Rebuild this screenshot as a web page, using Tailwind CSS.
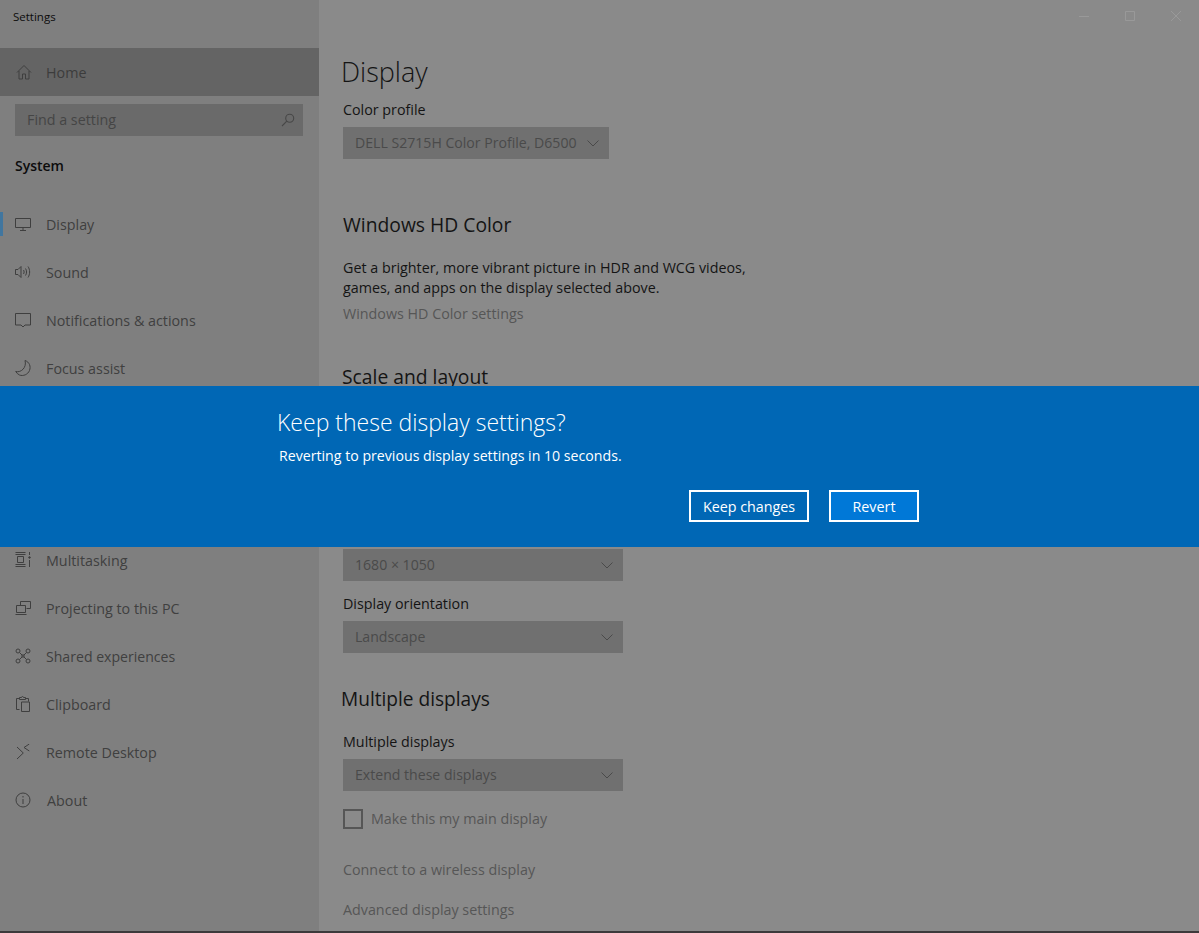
<!DOCTYPE html>
<html lang="en">
<head>
  <meta charset="UTF-8">
  <title>Settings</title>
  <script src="https://cdn.jsdelivr.net/npm/@tailwindcss/browser@4"></script>
</head>
<body class="bg-[#8a8a8a] font-['Open_Sans',sans-serif] overflow-hidden">
  <div class="relative flex h-[933px] w-[1199px] overflow-hidden">

    <!-- sidebar -->
    <aside class="w-[319px] shrink-0 bg-[#7f7f7f] text-[14.3px] text-[#404040]">
      <div class="h-[48px] pl-[13px] pt-[8px] text-[11.5px] leading-[18px] text-[#0c0c0c]">Settings</div>
      <div class="flex h-[48px] items-center bg-[#646464] text-[#3c3c3c]">
        <svg class="ml-[16px] w-[16px] h-[16px]" viewBox="0 0 16 16" fill="none" stroke="#3f3f3f" stroke-width="1"><path d="M1 8.500 8 1.500l7 7M3 7v8h3.500v-5h3v5H13V7"/></svg>
        <span class="ml-[14px] pt-[2px]">Home</span>
      </div>
      <div class="ml-[15px] mr-[16px] mt-[8px] flex h-[32px] items-center justify-between bg-[#6a6a6a] pl-[12px] pr-[8px] text-[#454545]">
        <span>Find a setting</span>
        <svg class="w-[14px] h-[14px]" viewBox="0 0 14 14" fill="none" stroke="#474747" stroke-width="1.100"><circle cx="8.700" cy="5.300" r="4"/><path d="M5.800 8.200 1 13"/></svg>
      </div>
      <div class="mt-[20px] ml-[15px] h-[20px] text-[14px] leading-[20px] font-semibold text-[#0c0c0c]">System</div>

      <nav class="mt-[24px]">
        <a class="relative flex h-[48px] items-center">
          <span class="absolute left-0 top-[12px] h-[24px] w-[3px] bg-[#41769f]"></span>
          <svg class="ml-[15px] w-[16px] h-[16px]" viewBox="0 0 16 16" fill="none" stroke="#3f3f3f"><path d="M.500 2.500h15v9H.500zM8 11.500v3M5 14.500h6"/></svg>
          <span class="ml-[15px] pt-[2px]">Display</span>
        </a>
        <a class="flex h-[48px] items-center">
          <svg class="ml-[15px] w-[16px] h-[16px]" viewBox="0 0 16 16" fill="none" stroke="#3f3f3f"><path d="M.500 5.500h2.500l3-3v11l-3-3H.500zM8.500 6c.8 1.200.8 2.800 0 4M10.500 4.500c1.400 2 1.400 5 0 7M13 2.500c2.200 3.300 2.200 7.700 0 11"/></svg>
          <span class="ml-[15px] pt-[2px]">Sound</span>
        </a>
        <a class="flex h-[48px] items-center">
          <svg class="ml-[15px] w-[16px] h-[16px]" viewBox="0 0 16 16" fill="none" stroke="#3f3f3f"><path d="M.500 1.500h15v11.500h-5.500L8 15l-2-2H.500z"/></svg>
          <span class="ml-[15px] pt-[2px]">Notifications &amp; actions</span>
        </a>
        <a class="flex h-[48px] items-center">
          <svg class="ml-[15px] w-[16px] h-[16px]" viewBox="0 0 16 16" fill="none" stroke="#3f3f3f"><path d="M10 .500c4.500 1.500 6 6 4.500 10S8 16.500 4.500 15C3 14.300 1.500 13 .700 11.500 6 13 12 7.500 10 .500z"/></svg>
          <span class="ml-[15px] pt-[2px]">Focus assist</span>
        </a>
        <div class="h-[144px]"></div>
        <a class="flex h-[48px] items-center">
          <svg class="ml-[15px] w-[16px] h-[16px]" viewBox="0 0 16 16" fill="none" stroke="#3f3f3f"><path d="M.500 .500h10M.500 2.500h10M2.500 4.500h6v6h-6zM.500 12.500h10M.500 14.500h10M14.500 0v3M14.500 8v7"/><circle cx="14.500" cy="5.500" r=".8" fill="#3f3f3f"/></svg>
          <span class="ml-[15px] pt-[2px]">Multitasking</span>
        </a>
        <a class="flex h-[48px] items-center">
          <svg class="ml-[15px] w-[16px] h-[16px]" viewBox="0 0 16 16" fill="none" stroke="#3f3f3f"><path d="M5.500 5V1.500h10v7h-4M1.500 5.500h9v7h-9zM.5 14.500h11"/></svg>
          <span class="ml-[15px] pt-[2px]">Projecting to this PC</span>
        </a>
        <a class="flex h-[48px] items-center">
          <svg class="ml-[15px] w-[16px] h-[16px]" viewBox="0 0 16 16" fill="none" stroke="#3f3f3f"><circle cx="3" cy="3" r="2"/><circle cx="13" cy="3" r="2"/><circle cx="3" cy="13" r="2"/><circle cx="13" cy="13" r="2"/><path d="M4.500 4.500 7 7h2l2.500-2.500M4.500 11.500 7 9h2l2.500 2.500M7 7v2M9 7v2"/></svg>
          <span class="ml-[15px] pt-[2px] text-[14.1px]">Shared experiences</span>
        </a>
        <a class="flex h-[48px] items-center">
          <svg class="ml-[15px] w-[16px] h-[16px]" viewBox="0 0 16 16" fill="none" stroke="#3f3f3f"><path d="M4.500 13.500h-3v-11h3M10.500 2.500h3v3M4.500 1.500h2c0-1.300 2-1.300 2 0h2v2h-6zM6.500 6h8v9.500h-8z"/></svg>
          <span class="ml-[15px] pt-[2px]">Clipboard</span>
        </a>
        <a class="flex h-[48px] items-center">
          <svg class="ml-[15px] w-[16px] h-[16px]" viewBox="0 0 16 16" fill="none" stroke="#3f3f3f"><path d="M2 3l6.300 6L2 15M14.300 0 9 3.500l5.300 3.500"/></svg>
          <span class="ml-[15px] pt-[2px]">Remote Desktop</span>
        </a>
        <a class="flex h-[48px] items-center">
          <svg class="ml-[15px] w-[16px] h-[16px]" viewBox="0 0 16 16" fill="none" stroke="#3f3f3f"><circle cx="8" cy="8" r="7"/><path d="M8 7v5M8 4v1.500"/></svg>
          <span class="ml-[16px] pt-[2px]">About</span>
        </a>
      </nav>
    </aside>

    <!-- content -->
    <main class="flex-1 pl-[24px] pt-[52px] text-[14.3px] text-[#141414]">
      <h1 class="-ml-[2px] h-[40px] text-[27px] leading-[40px] font-light">Display</h1>
      <p class="mt-[8px] h-[20px] leading-[20px]">Color profile</p>
      <div class="mt-[7px] flex h-[32px] w-[266px] items-center justify-between bg-[#707070] pl-[12px] pr-[10px] text-[14.1px] text-[#4a4a4a]">
        <span>DELL S2715H Color Profile, D6500</span>
        <svg class="w-[12px] h-[12px]" viewBox="0 0 12 12" fill="none" stroke="#4a4a4a"><path d="M.500 3.500 6 9l5.500-5.500"/></svg>
      </div>

      <h2 class="mt-[52px] h-[28px] text-[19.300px] leading-[28px]">Windows HD Color</h2>
      <p class="mt-[19px] leading-[20px]">Get a brighter, more vibrant picture in HDR and WCG videos,<br>games, and apps on the display selected above.</p>
      <p class="mt-[6px] h-[20px] leading-[20px] text-[#565656]">Windows HD Color settings</p>

      <h2 class="-ml-[1px] mt-[39px] h-[28px] text-[19.300px] leading-[28px]">Scale and layout</h2>

      <div class="mt-[158px] flex h-[32px] w-[280px] items-center justify-between bg-[#707070] pl-[12px] pr-[10px] text-[14.1px] text-[#4a4a4a]">
        <span>1680 × 1050</span>
        <svg class="w-[12px] h-[12px]" viewBox="0 0 12 12" fill="none" stroke="#4a4a4a"><path d="M.500 3.500 6 9l5.500-5.500"/></svg>
      </div>
      <p class="mt-[13px] h-[20px] leading-[20px]">Display orientation</p>
      <div class="mt-[7px] flex h-[32px] w-[280px] items-center justify-between bg-[#707070] pl-[12px] pr-[10px] text-[14.1px] text-[#4a4a4a]">
        <span>Landscape</span>
        <svg class="w-[12px] h-[12px]" viewBox="0 0 12 12" fill="none" stroke="#4a4a4a"><path d="M.500 3.500 6 9l5.500-5.500"/></svg>
      </div>

      <h2 class="-ml-[2px] mt-[32px] h-[28px] text-[19.100px] leading-[28px]">Multiple displays</h2>
      <p class="mt-[19px] h-[20px] leading-[20px]">Multiple displays</p>
      <div class="mt-[7px] flex h-[32px] w-[280px] items-center justify-between bg-[#707070] pl-[12px] pr-[10px] text-[14.1px] text-[#4a4a4a]">
        <span>Extend these displays</span>
        <svg class="w-[12px] h-[12px]" viewBox="0 0 12 12" fill="none" stroke="#4a4a4a"><path d="M.500 3.500 6 9l5.500-5.500"/></svg>
      </div>
      <div class="mt-[18px] flex h-[20px] items-center text-[#565656]">
        <span class="h-[20px] w-[20px] border-2 border-[#565656]"></span>
        <span class="ml-[8px] leading-[20px]">Make this my main display</span>
      </div>
      <p class="mt-[31px] h-[20px] leading-[20px] text-[#565656]">Connect to a wireless display</p>
      <p class="mt-[20px] h-[20px] leading-[20px] text-[#565656]">Advanced display settings</p>
    </main>

    <!-- window buttons -->
    <div class="absolute right-0 top-0 flex h-[32px]">
      <div class="flex w-[46px] items-center justify-center"><svg class="w-[10px] h-[10px]" viewBox="0 0 10 10" stroke="#999999"><path d="M0 5.500h10"/></svg></div>
      <div class="flex w-[46px] items-center justify-center"><svg class="w-[10px] h-[10px]" viewBox="0 0 10 10" fill="none" stroke="#999999"><path d="M.500.500h9v9h-9z"/></svg></div>
      <div class="flex w-[46px] items-center justify-center"><svg class="w-[10px] h-[10px]" viewBox="0 0 10 10" stroke="#999999"><path d="m0 0 10 10M10 0 0 10"/></svg></div>
    </div>

    <!-- what shows under the window's bottom edge -->
    <div class="absolute inset-x-0 bottom-0 h-[2px] bg-[#3d3a3b]"></div>

    <!-- confirm banner, lies over the page -->
    <div class="absolute inset-x-0 top-[386px] h-[161px] bg-[#0067b5] text-white">
      <div class="ml-[277px] w-[642px] pt-[20px]">
        <p class="h-[32px] text-[23px] leading-[32px] font-light">Keep these display settings?</p>
        <p class="ml-[2px] mt-[8px] h-[20px] text-[14.17px] leading-[20px]">Reverting to previous display settings in 10 seconds.</p>
        <div class="mt-[24px] flex justify-end gap-[20px] text-[14.3px]">
          <button class="h-[32px] w-[120px] border-2 border-white bg-[#0067b5] pt-[2px]">Keep changes</button>
          <button class="h-[32px] w-[90px] border-2 border-white bg-[#0078d7] pt-[2px]">Revert</button>
        </div>
      </div>
    </div>
  </div>
</body>
</html>
